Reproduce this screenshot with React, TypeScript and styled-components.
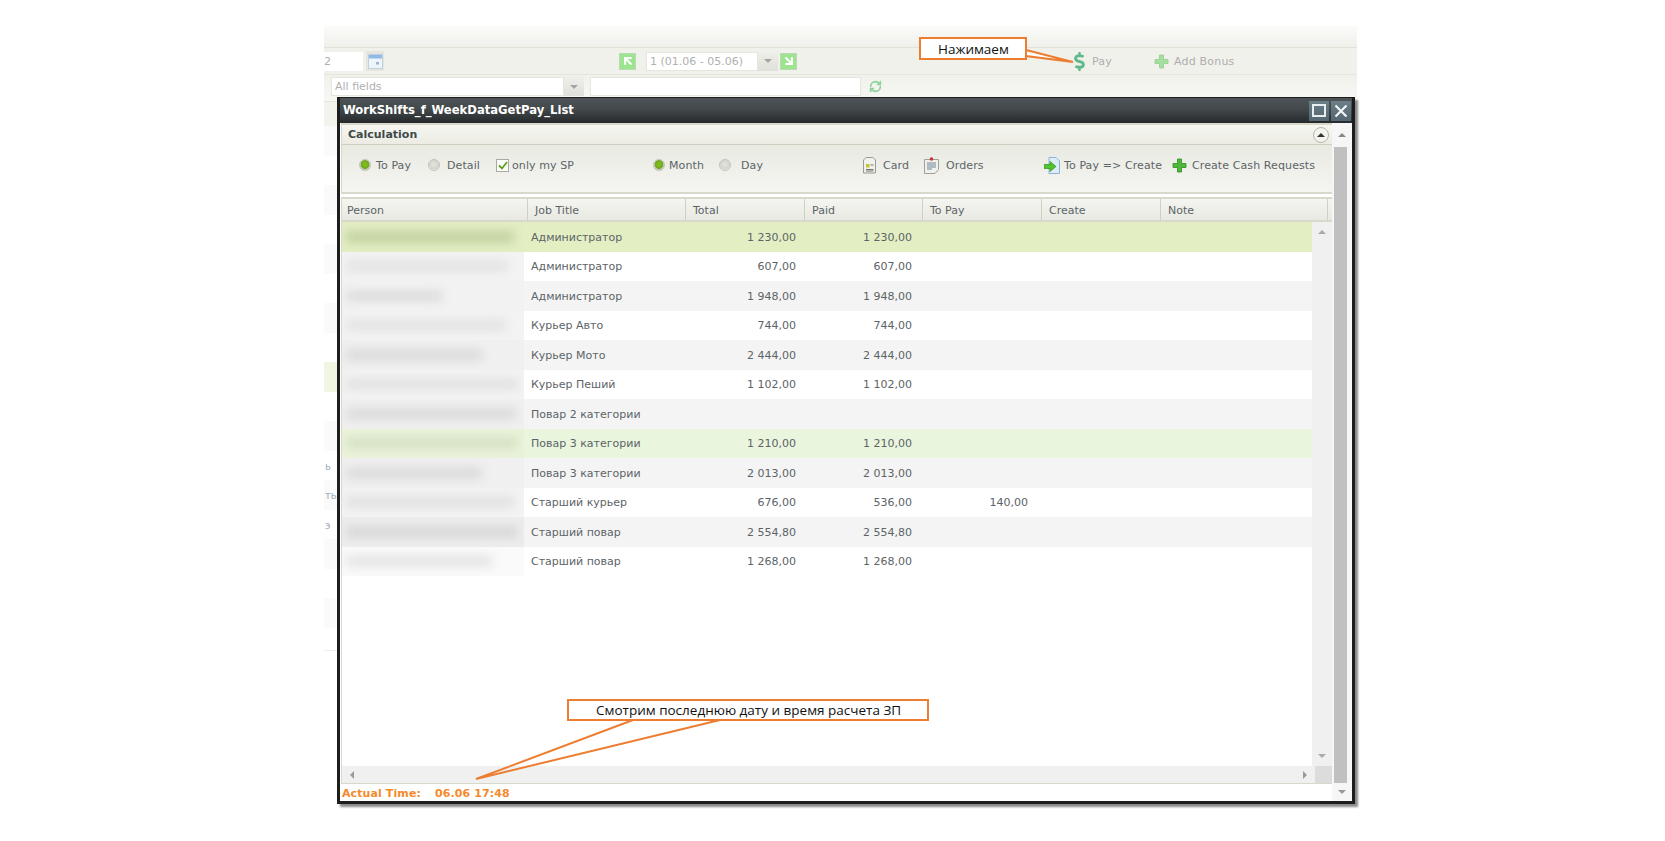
import React from 'react';
import styled, { createGlobalStyle } from 'styled-components';
import { ArrowUpLeft, ArrowDownRight, RefreshCw } from 'lucide-react';
import { FaDollarSign } from 'react-icons/fa';

const GlobalStyle = createGlobalStyle`
  html, body { margin: 0; padding: 0; background: #fff; }
  body { font-family: "DejaVu Sans", Verdana, sans-serif; font-size: 11px; color: #555; }
`;

const Page = styled.div`
  width: 1665px; height: 841px; padding: 26px 0 0 324px; box-sizing: border-box; overflow: hidden;
`;
const Desk = styled.div`
  position: relative; width: 1033px;
`;
const TopStrip = styled.div`
  height: 21px; background: linear-gradient(#fbfbfa, #f0f0eb);
`;
const BarOne = styled.div`
  display: flex; align-items: center; height: 27px; box-sizing: border-box;
  border-top: 1px solid #e2e2da; background: #f1f1ec;
`;
const BarTwo = styled.div`
  display: flex; align-items: flex-start; height: 28px; box-sizing: border-box; padding-top: 2px;
  border-top: 1px solid #e6e6de; border-bottom: 1px solid #e6e6de;
  background: linear-gradient(#f1f1ec, #f7f7f4);
`;
const Field = styled.div<{ $w: number; $ml?: number; $pl?: number; $bare?: boolean }>`
  display: flex; align-items: center; width: ${p => p.$w}px; height: 19px; margin-left: ${p => p.$ml || 0}px;
  box-sizing: border-box; padding-left: ${p => p.$pl ?? 3}px; background: #fff; color: #b0b0b0; font-size: 11px;
  white-space: nowrap; overflow: hidden;
  ${p => (p.$bare ? '' : 'border: 1px solid #e6e6df;')}
`;
const DropBtn = styled.div`
  display: flex; align-items: center; justify-content: center; width: 20px; height: 19px;
  background: linear-gradient(#efefea, #e0e0da);
`;
const Arrow = styled.i<{ $dir: 'up' | 'down' | 'left' | 'right'; $color?: string }>`
  display: block; width: 0; height: 0; border-style: solid;
  border-color: transparent;
  border-width: ${p => (p.$dir === 'up' ? '0 4px 4px' : p.$dir === 'down' ? '4px 4px 0' : p.$dir === 'left' ? '4px 4px 4px 0' : '4px 0 4px 4px')};
  ${p => (p.$dir === 'up' ? 'border-bottom-color' : p.$dir === 'down' ? 'border-top-color' : p.$dir === 'left' ? 'border-right-color' : 'border-left-color')}: ${p => p.$color || '#aaa'};
`;
const CalBtn = styled.div`
  display: flex; align-items: center; justify-content: center; width: 18px; height: 20px; margin-left: 3px;
  background: #e6e6e0;
`;
const GreenBtn = styled.div<{ $ml: number }>`
  display: flex; align-items: center; justify-content: center; width: 17px; height: 17px; margin-left: ${p => p.$ml}px;
  background: #9de48f; border: 1px solid #bcd8b4; color: #fff; box-sizing: border-box;
`;
const ToolGroup = styled.div<{ $w: number; $ml?: number }>`
  display: flex; align-items: center; gap: 6px; width: ${p => p.$w}px; margin-left: ${p => p.$ml || 0}px;
  color: #aeaeae; font-size: 11px; letter-spacing: 0.2px;
`;
const BackHead = styled.div`
  height: 24px; background: #f3f3ee;
`;
const BackList = styled.div`
  height: 524px; overflow: hidden; border-bottom: 1px solid #ececec;
`;
const BackRow = styled.div<{ $tone: string }>`
  height: 29.5px; line-height: 32px; padding-left: 1px; background: ${p => p.$tone}; color: #a0aeb8; font-size: 10px;
  white-space: nowrap;
`;

const Win = styled.div`
  position: absolute; left: 13px; top: 71px; width: 1018px; height: 707px; box-sizing: border-box;
  display: flex; flex-direction: column;
  border: 3px solid #1d1d1d; border-top-width: 1px; background: #fff;
  box-shadow: 3px 3px 2px #8a8a8a;
`;
const TitleBar = styled.div`
  display: flex; align-items: center; justify-content: space-between; height: 25px; flex: none; padding: 0 1px 0 3px;
  background: linear-gradient(#4d5356, #43484b 45%, #25292b);
  color: #fff; font-weight: bold; font-size: 11.6px;
`;
const TitleText = styled.span`
  margin-top: -2px;
`;
const WinBtns = styled.div`
  display: flex; gap: 2px;
`;
const WinBtn = styled.div`
  display: flex; align-items: center; justify-content: center; width: 20px; height: 20px;
  background: linear-gradient(#6b7f88, #546670); color: #eef3f5;
`;
const WinBody = styled.div`
  display: flex; flex: 1; min-height: 0;
`;
const Main = styled.div`
  display: flex; flex-direction: column; width: 992px; flex: none;
`;
const SectionHead = styled.div`
  display: flex; align-items: center; justify-content: space-between; height: 22px; flex: none; box-sizing: border-box;
  padding: 0 3px 0 6px; margin-left: 1px;
  border-top: 2px solid #d9d9cb; border-left: 1px solid #d9d9cb; border-bottom: 1px solid #cfcfc4;
  background: linear-gradient(#f6f6f1, #ecece4);
  color: #3f4a4a; font-weight: bold; font-size: 11px;
`;
const Collapse = styled.div`
  display: flex; align-items: center; justify-content: center; width: 14px; height: 14px; border-radius: 50%;
  border: 1px solid #b8b8ac; background: #f4f4ee;
`;
const OptionsBar = styled.div`
  display: flex; align-items: flex-start; height: 49px; flex: none; box-sizing: border-box; padding: 11px 0 0 17px; margin-left: 1px;
  border-left: 1px solid #d9d9cb; border-bottom: 2px solid #d9d9cb;
  background: linear-gradient(#e8e9e1, #f5f6f2);
`;
const Option = styled.div<{ $w?: number; $gap: number }>`
  display: flex; align-items: center; gap: ${p => p.$gap}px; height: 18px; width: ${p => (p.$w ? `${p.$w}px` : 'auto')};
  flex: none; color: #5c6468; font-size: 11px; letter-spacing: 0.1px; white-space: nowrap;
`;
const Radio = styled.span<{ $on?: boolean }>`
  display: block; width: 12px; height: 12px; border-radius: 50%; flex: none; box-sizing: border-box;
  border: 1px solid #c2c4b8;
  background: ${p => (p.$on
    ? 'radial-gradient(circle at 50% 45%, #86c226 0, #6fa81a 55%, #c6cabb 62%)'
    : 'radial-gradient(circle at 50% 45%, #e4e4e0 0, #d4d4ce 60%, #e8e8e3 70%)')};
`;
const CheckBox = styled.span`
  display: flex; align-items: center; justify-content: center; width: 13px; height: 13px; box-sizing: border-box;
  border: 1px solid #a9a9a2; background: #fbfbfa; flex: none;
`;
const Gap = styled.div`
  height: 3px; flex: none;
`;
const Grid = styled.div`
  display: flex; flex-direction: column; flex: 1; min-height: 0; margin-left: 1px;
  border-left: 1px solid #d9d9cb; border-bottom: 1px solid #d9d9cb;
`;
const GridHead = styled.div`
  display: grid; grid-template-columns: 186px 158px 119px 118px 119px 119px 167px 1fr; height: 25px; flex: none; box-sizing: border-box;
  border-top: 2px solid #d9d9cb; border-bottom: 2px solid #d9d9cb;
  background: linear-gradient(#f5f5f1, #e8e9e2);
`;
const HeadCell = styled.div<{ $first?: boolean }>`
  display: flex; align-items: center; padding-left: ${p => (p.$first ? 5 : 7)}px; padding-top: 2px;
  border-right: 1px solid #cfcfc3; color: #5c6468; font-size: 11px;
`;
const GridBody = styled.div`
  display: flex; flex: 1; min-height: 0;
`;
const Rows = styled.div`
  width: 970px; flex: none; overflow: hidden;
`;
const Row = styled.div<{ $bg: string }>`
  display: grid; grid-template-columns: 182px 161px 115px 116px 116px 1fr; height: 29.5px; align-items: center;
  background: ${p => p.$bg};
`;
const PersonCell = styled.div<{ $bg: string }>`
  align-self: stretch; display: flex; align-items: center; overflow: hidden; background: ${p => p.$bg};
`;
const Smudge = styled.div<{ $w: number; $c: string }>`
  height: 12px; margin-left: 4px; width: ${p => p.$w}px; background: ${p => p.$c}; filter: blur(5px);
`;
const JobCell = styled.div`
  padding: 1px 0 0 7px; color: #5c6468; font-size: 11px; white-space: nowrap;
`;
const NumCell = styled.div`
  padding: 1px 4px 0 0; text-align: right; color: #5c6468; font-size: 11px; white-space: nowrap;
`;
const InnerVScroll = styled.div`
  display: flex; flex-direction: column; align-items: center; justify-content: space-between; flex: 1;
  padding: 8px 0 8px; background: #f0f0f0;
`;
const HScroll = styled.div`
  display: flex; align-items: center; justify-content: space-between; height: 17px; flex: none; background: #f0f0f0;
  padding-left: 8px;
`;
const Corner = styled.div`
  width: 17px; height: 17px; background: #dcdcdc; margin-left: 8px;
`;
const HRight = styled.div`
  display: flex; align-items: center;
`;
const Footer = styled.div`
  display: flex; align-items: center; height: 17px; flex: none; padding: 1px 0 0 2px; box-sizing: border-box;
  color: #f58a2c; font-weight: bold; font-size: 11px; letter-spacing: 0.1px; white-space: nowrap;
`;
const FooterLabel = styled.span`
  width: 93px;
`;
const OuterVScroll = styled.div`
  display: flex; flex-direction: column; flex: 1; background: #f6f6f6;
`;
const ScrollEnd = styled.div<{ $h: number }>`
  display: flex; align-items: center; justify-content: center; height: ${p => p.$h}px; flex: none;
`;
const Thumb = styled.div`
  flex: 1; width: 13px; margin-left: 2px; background: #c0c0c0;
`;

const Callout = styled.div<{ $x: number; $y: number; $w: number; $h: number; $pl: number }>`
  position: absolute; left: ${p => p.$x}px; top: ${p => p.$y}px; width: ${p => p.$w}px; height: ${p => p.$h}px;
  box-sizing: border-box; display: flex; align-items: center; padding-left: ${p => p.$pl}px;
  border: 2px solid #ed7d31; background: #fff; color: #111;
  font-family: "Open Sans", sans-serif; font-size: 13.5px; white-space: nowrap;
`;
const Overlay = styled.svg`
  position: absolute; left: 0; top: 0; width: 1665px; height: 841px; pointer-events: none;
`;

const PlusIcon = ({ light }: { light?: boolean }) => (
  <svg width="15" height="15" viewBox="0 0 15 15">
    <path d="M5.5 1h4v4.5H14v4H9.5V14h-4V9.5H1v-4h4.5z" fill={light ? '#a6dda0' : '#4fb83a'} stroke={light ? '#8fd08a' : '#2f8f22'} strokeWidth="0.8" />
  </svg>
);

const CalIcon = () => (
  <svg width="15" height="15" viewBox="0 0 15 15">
    <rect x="0.5" y="0.5" width="14" height="14" fill="#eef4fb" stroke="#c2d0de" />
    <rect x="1" y="1" width="13" height="3.5" fill="#8fbce6" />
    <rect x="8" y="8" width="3" height="2.5" fill="#9fb4cc" />
  </svg>
);

const CardIcon = () => (
  <svg width="13" height="17" viewBox="0 0 13 17">
    <path d="M3 .5h7l2.5 2.5v13H.5V3z" fill="#f1f1ec" stroke="#9a9a94" />
    <rect x="3" y="7" width="3.5" height="3.5" fill="#c8c23a" />
    <path d="M7.5 8h3M3 12.5h7.5M3 14h7.5" stroke="#77776f" />
  </svg>
);

const OrdersIcon = () => (
  <svg width="15" height="17" viewBox="0 0 15 17">
    <path d="M.5 2.5h14v10l-3.5 4H.5z" fill="#f1f1ec" stroke="#a0a09a" />
    <circle cx="7.5" cy="2" r="1.8" fill="#c8323a" />
    <path d="M3 6h9M3 8h9M3 10h9M3 12h5" stroke="#6a8598" />
  </svg>
);

const PayCreateIcon = () => (
  <svg width="16" height="17" viewBox="0 0 16 17">
    <path d="M5 .5h7l3.5 3.5v12.5H5z" fill="#dcebf8" stroke="#8cb4d6" />
    <path d="M0 7.5h6V4.5l6 5-6 5v-3H0z" fill="#54c22f" stroke="#2f9019" strokeWidth="0.7" />
  </svg>
);

const people = [
  { job: 'Администратор', total: '1 230,00', paid: '1 230,00', pay: '', bg: '#e3eec3', side: '#e3eec3', w: 168, c: '#c3d3a2' },
  { job: 'Администратор', total: '607,00', paid: '607,00', pay: '', bg: '#ffffff', side: '#f3f3f3', w: 162, c: '#e4e4e4' },
  { job: 'Администратор', total: '1 948,00', paid: '1 948,00', pay: '', bg: '#f4f4f4', side: '#f2f2f2', w: 96, c: '#dedede' },
  { job: 'Курьер Авто', total: '744,00', paid: '744,00', pay: '', bg: '#ffffff', side: '#f3f3f3', w: 160, c: '#e4e4e4' },
  { job: 'Курьер Мото', total: '2 444,00', paid: '2 444,00', pay: '', bg: '#f4f4f4', side: '#f0f0f0', w: 136, c: '#dcdcdc' },
  { job: 'Курьер Пеший', total: '1 102,00', paid: '1 102,00', pay: '', bg: '#ffffff', side: '#f3f3f3', w: 172, c: '#e2e2e2' },
  { job: 'Повар 2 категории', total: '', paid: '', pay: '', bg: '#f4f4f4', side: '#f0f0f0', w: 170, c: '#dcdcdc' },
  { job: 'Повар 3 категории', total: '1 210,00', paid: '1 210,00', pay: '', bg: '#eaf5dd', side: '#eaf3da', w: 172, c: '#d6e2c4' },
  { job: 'Повар 3 категории', total: '2 013,00', paid: '2 013,00', pay: '', bg: '#f4f4f4', side: '#f0f0f0', w: 136, c: '#dcdcdc' },
  { job: 'Старший курьер', total: '676,00', paid: '536,00', pay: '140,00', bg: '#ffffff', side: '#f3f3f3', w: 168, c: '#e2e2e2' },
  { job: 'Старший повар', total: '2 554,80', paid: '2 554,80', pay: '', bg: '#f4f4f4', side: '#ededed', w: 172, c: '#d8d8d8' },
  { job: 'Старший повар', total: '1 268,00', paid: '1 268,00', pay: '', bg: '#ffffff', side: '#fafafa', w: 146, c: '#e6e6e6' },
];

const columns = ['Person', 'Job Title', 'Total', 'Paid', 'To Pay', 'Create', 'Note', ''];

const backTone = (i: number) => (i === 8 ? '#f1f6e2' : i % 2 === 0 ? '#fafafa' : '#ffffff');
const backText: Record<number, string> = { 11: 'ь', 12: 'ть', 13: 'э' };

export default function App() {
  return (
    <Page>
      <GlobalStyle />
      <Desk>
        <TopStrip />
        <BarOne>
          <Field $w={39} $pl={0} $bare>2</Field>
          <CalBtn><CalIcon /></CalBtn>
          <GreenBtn $ml={235}><ArrowUpLeft size={14} strokeWidth={3.5} /></GreenBtn>
          <Field $w={112} $ml={10}>1 (01.06 - 05.06)</Field>
          <DropBtn><Arrow $dir="down" $color="#a5a5a5" /></DropBtn>
          <GreenBtn $ml={2}><ArrowDownRight size={14} strokeWidth={3.5} /></GreenBtn>
          <ToolGroup $w={81} $ml={276}>
            <FaDollarSign size={19} color="#5dba8c" style={{ marginLeft: -3, marginRight: -3 }} />
            <span>Pay</span>
          </ToolGroup>
          <ToolGroup $w={90}>
            <PlusIcon light />
            <span style={{ marginLeft: -1 }}>Add Bonus</span>
          </ToolGroup>
        </BarOne>
        <BarTwo>
          <Field $w={233} $ml={7}>All fields</Field>
          <DropBtn><Arrow $dir="down" $color="#a5a5a5" /></DropBtn>
          <Field $w={271} $ml={6} />
          <ToolGroup $w={20} $ml={8}>
            <RefreshCw size={13} color="#8cd29a" strokeWidth={3} style={{ marginTop: 3 }} />
          </ToolGroup>
        </BarTwo>
        <BackHead />
        <BackList>
          {Array.from({ length: 18 }).map((_, i) => (
            <BackRow key={i} $tone={backTone(i)}>{backText[i]}</BackRow>
          ))}
        </BackList>

        <Win>
          <TitleBar>
            <TitleText>WorkShifts_f_WeekDataGetPay_List</TitleText>
            <WinBtns>
              <WinBtn><svg width="14" height="13" viewBox="0 0 14 13"><rect x="1" y="1" width="12" height="11" fill="none" stroke="#e8eef0" strokeWidth="2" /></svg></WinBtn>
              <WinBtn><svg width="14" height="14" viewBox="0 0 14 14"><path d="M1.5 1.5l11 11M12.5 1.5l-11 11" stroke="#f2f5f6" strokeWidth="2.2" /></svg></WinBtn>
            </WinBtns>
          </TitleBar>
          <WinBody>
            <Main>
              <SectionHead>
                Calculation
                <Collapse><Arrow $dir="up" $color="#333" /></Collapse>
              </SectionHead>
              <OptionsBar>
                <Option $w={69} $gap={5}><Radio $on />To Pay</Option>
                <Option $w={68} $gap={7}><Radio />Detail</Option>
                <Option $w={157} $gap={3}>
                  <CheckBox>
                    <svg width="10" height="9" viewBox="0 0 10 9"><path d="M1 4.5l3 3 5-6.5" fill="none" stroke="#5f9e1e" strokeWidth="1.8" /></svg>
                  </CheckBox>
                  only my SP
                </Option>
                <Option $w={66} $gap={4}><Radio $on />Month</Option>
                <Option $w={144} $gap={10}><Radio />Day</Option>
                <Option $w={61} $gap={7}><CardIcon />Card</Option>
                <Option $w={120} $gap={7}><OrdersIcon />Orders</Option>
                <Option $w={128} $gap={4}><PayCreateIcon />To Pay =&gt; Create</Option>
                <Option $gap={5}><PlusIcon />Create Cash Requests</Option>
              </OptionsBar>
              <Gap />
              <Grid>
                <GridHead>
                  {columns.map((c, i) => (
                    <HeadCell key={i} $first={i === 0}>{c}</HeadCell>
                  ))}
                </GridHead>
                <GridBody>
                  <Rows>
                    {people.map((p, i) => (
                      <Row key={i} $bg={p.bg}>
                        <PersonCell $bg={p.side}><Smudge $w={p.w} $c={p.c} /></PersonCell>
                        <JobCell>{p.job}</JobCell>
                        <NumCell>{p.total}</NumCell>
                        <NumCell>{p.paid}</NumCell>
                        <NumCell>{p.pay}</NumCell>
                      </Row>
                    ))}
                  </Rows>
                  <InnerVScroll>
                    <Arrow $dir="up" />
                    <Arrow $dir="down" />
                  </InnerVScroll>
                </GridBody>
                <HScroll>
                  <Arrow $dir="left" $color="#999" />
                  <HRight>
                    <Arrow $dir="right" $color="#999" />
                    <Corner />
                  </HRight>
                </HScroll>
              </Grid>
              <Footer>
                <FooterLabel>Actual Time:</FooterLabel>
                <span>06.06 17:48</span>
              </Footer>
            </Main>
            <OuterVScroll>
              <ScrollEnd $h={24}><Arrow $dir="up" $color="#888" /></ScrollEnd>
              <Thumb />
              <ScrollEnd $h={18}><Arrow $dir="down" $color="#999" /></ScrollEnd>
            </OuterVScroll>
          </WinBody>
        </Win>

        <Overlay viewBox="324 26 1665 841">
          <path d="M1026 50L1073 62L1026 56Z" fill="#fff" stroke="#ed7d31" strokeWidth="2" />
          <path d="M633 720L476 779L720 720" fill="none" stroke="#ed7d31" strokeWidth="2" />
        </Overlay>
        <Callout $x={595} $y={11} $w={108} $h={23} $pl={17}>Нажимаем</Callout>
        <Callout $x={243} $y={673} $w={362} $h={22} $pl={27}>Смотрим последнюю дату и время расчета ЗП</Callout>
      </Desk>
    </Page>
  );
}
